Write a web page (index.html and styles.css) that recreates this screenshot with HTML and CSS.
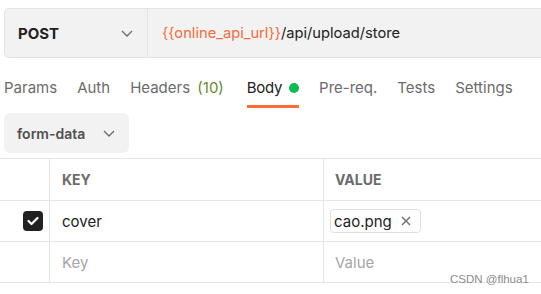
FILE: index.html
```html
<!DOCTYPE html>
<html>
<head>
<meta charset="utf-8">
<link rel="stylesheet" href="styles.css">
</head>
<body>
<div class="page">
  <div class="urlbar">
    <div class="method">
      <span class="method-name">POST</span>
      <svg class="chev" width="12" height="7" viewBox="0 0 12 7"><path d="M1 1 L6 6 L11 1" fill="none" stroke="#6b6b6b" stroke-width="1.3"/></svg>
    </div>
    <div class="url"><span class="var">{{online_api_url}}</span>/api/upload/store</div>
  </div>

  <div class="tabs">
    <div class="tab">Params</div>
    <div class="tab">Auth</div>
    <div class="tab">Headers <span class="count">(10)</span></div>
    <div class="tab active">Body <span class="dot"></span></div>
    <div class="tab">Pre-req.</div>
    <div class="tab">Tests</div>
    <div class="tab">Settings</div>
  </div>

  <div class="modebar">
    <div class="mode">
      <span>form-data</span>
      <svg class="chev" width="12" height="7" viewBox="0 0 12 7"><path d="M1 1 L6 6 L11 1" fill="none" stroke="#6b6b6b" stroke-width="1.3"/></svg>
    </div>
  </div>

  <div class="table">
    <div class="row head">
      <div class="cell check"></div>
      <div class="cell key">KEY</div>
      <div class="cell value">VALUE</div>
    </div>
    <div class="row">
      <div class="cell check">
        <span class="box"><svg width="12" height="10" viewBox="0 0 12 10"><path d="M1.5 5 L4.5 8 L10.5 2" fill="none" stroke="#fff" stroke-width="2.2" stroke-linecap="round" stroke-linejoin="round"/></svg></span>
      </div>
      <div class="cell key">cover</div>
      <div class="cell value">
        <span class="chip">cao.png <svg class="x" width="10" height="10" viewBox="0 0 10 10"><path d="M1 1 L9 9 M9 1 L1 9" stroke="#6b6b6b" stroke-width="1.4"/></svg></span>
      </div>
    </div>
    <div class="row">
      <div class="cell check"></div>
      <div class="cell key ph">Key</div>
      <div class="cell value ph">Value</div>
    </div>
  </div>
  <div class="watermark">CSDN @flhua1</div>
</div>
</body>
</html>
```

FILE: styles.css
```css
html, body {
  margin: 0;
  padding: 0;
  background: #fff;
}
.page {
  position: relative;
  width: 541px;
  height: 294px;
  overflow: hidden;
  font-family: Inter, "Noto Sans", sans-serif;
  color: #212121;
}
.urlbar {
  display: flex;
  margin: 8px 0 0 4px;
  height: 50px;
  box-sizing: border-box;
  background: #f2f2f2;
  border: 1px solid #e3e3e3;
  border-right: none;
  border-radius: 5px 0 0 5px;
}
.method {
  width: 143px;
  box-sizing: border-box;
  display: flex;
  align-items: center;
  justify-content: space-between;
  padding: 0 14px 0 13px;
  border-right: 1px solid #e3e3e3;
}
.method-name {
  font-weight: 700;
  font-size: 15px;
  color: #212121;
}
.url {
  display: flex;
  align-items: center;
  padding-left: 14px;
  font-size: 14.7px;
  color: #212121;
}
.var { color: #f26b3a; }

.tabs {
  display: flex;
  gap: 20px;
  margin: 12px 0 0 4px;
  height: 38px;
}
.tab {
  display: flex;
  align-items: flex-start;
  gap: 5px;
  padding-top: 8px;
  line-height: 20px;
  font-size: 15px;
  color: #6b6b6b;
  box-sizing: border-box;
  height: 38px;
  border-bottom: 3px solid transparent;
  white-space: pre;
}
.tab .count { color: #6a8a2c; margin-left: -2px; padding-right: 3px; }
.tab.active {
  color: #212121;
  gap: 3px;
  letter-spacing: -0.3px;
  border-bottom-color: #ff6c37;
}
.dot {
  width: 10px;
  height: 10px;
  border-radius: 50%;
  background: #0cbb52;
  margin-top: 5px;
}

.modebar {
  margin: 5px 0 0 4px;
}
.mode {
  width: 125px;
  height: 40px;
  box-sizing: border-box;
  background: #f2f2f2;
  border-radius: 6px;
  display: flex;
  align-items: center;
  gap: 18px;
  padding-left: 13px;
  font-size: 14px;
  font-weight: 600;
  color: #505050;
}

.table {
  margin-top: 5px;
  border-top: 1px solid #e6e6e6;
}
.row {
  display: grid;
  grid-template-columns: 49px 274px 1fr;
  height: 41px;
  box-sizing: border-box;
  border-bottom: 1px solid #e6e6e6;
}
.row.head { height: 42px; }
.cell {
  display: flex;
  align-items: center;
  font-size: 15px;
}
.cell.key, .cell.value {
  border-left: 1px solid #e6e6e6;
  padding-left: 12px;
}
.cell.value { padding-left: 6px; }
.row.head .cell.value, .ph.value { padding-left: 11px; }
.head .cell {
  font-size: 14px;
  font-weight: 700;
  color: #6b6b6b;
}
.check { justify-content: flex-end; padding-right: 6px; }
.box {
  width: 20px;
  height: 20px;
  border-radius: 4px;
  background: #212121;
  display: flex;
  align-items: center;
  justify-content: center;
}
.chip {
  display: inline-flex;
  align-items: center;
  gap: 9px;
  height: 24px;
  box-sizing: border-box;
  padding: 0 9px 0 3px;
  border: 1px solid #e0e0e0;
  border-radius: 4px;
  font-size: 15px;
  color: #212121;
}
.ph { color: #a6a6a6; }

.watermark {
  position: absolute;
  left: 450px;
  top: 273px;
  font-family: "Liberation Sans", Arial, sans-serif;
  font-size: 11.5px;
  color: #8c8c8c;
}
```
